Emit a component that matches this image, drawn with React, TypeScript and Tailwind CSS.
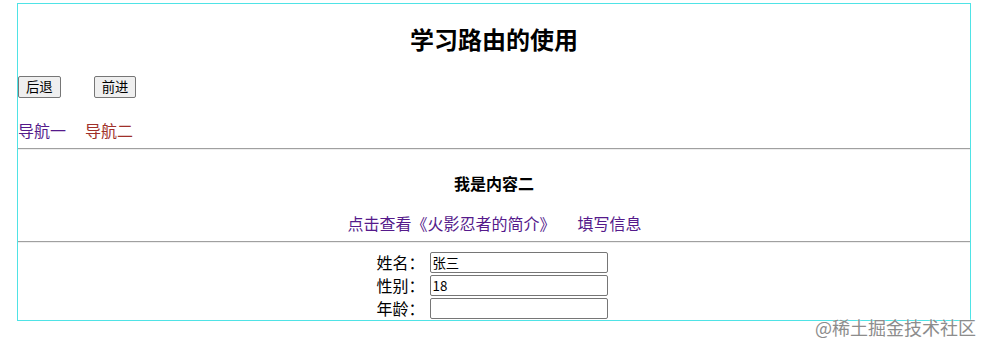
import React from 'react';

const cjk = "font-['Noto_Sans_CJK_SC','Noto_Sans',sans-serif]";

function Field({ label, value }: { label: string; value: string }) {
  return (
    <div className="flex h-[23px] items-start justify-center">
      <span className="mr-[5px] h-[21px] text-[16px] leading-[21px] text-black">{label}</span>
      <input
        readOnly
        value={value}
        className={`h-[21px] w-[178px] rounded-[2px] border border-[#767676] bg-white px-[2px] text-[13.33px] leading-[19px] text-black outline-none ${cjk}`}
      />
      <span className="w-[4px]" />
    </div>
  );
}

export default function App() {
  return (
    <div className={`relative h-[347px] w-[988px] bg-white ${cjk}`}>
      <div className="ml-[17px] mt-[3px] flex h-[318px] w-[954px] flex-col border border-[#4fe3e6]">
        <h2 className="mt-[19px] text-center text-[24px] font-bold leading-[32px] text-black">学习路由的使用</h2>

        <div className="mt-[21px] flex items-center">
          <button className="h-[22px] rounded-[2px] border border-[#767676] bg-[#efefef] px-[7px] text-[13.33px] leading-[18px] text-black">
            后退
          </button>
          <button className="ml-[33px] h-[22px] rounded-[2px] border border-[#767676] bg-[#efefef] px-[7px] text-[13.33px] leading-[18px] text-black">
            前进
          </button>
        </div>

        <div className="mt-[22px] flex text-[16px] leading-[20px]">
          <a className="text-[#551a8b]">导航一</a>
          <a className="ml-[19px] text-[#a0302a]">导航二</a>
        </div>

        <div className="mt-[8px] border-t border-b border-t-[#a0a0a0] border-b-[#eeeeee]" />

        <h4 className="mt-[23px] text-center text-[16px] font-bold leading-[20px] text-black">我是内容二</h4>

        <div className="mt-[20px] flex justify-center text-[16px] leading-[20px] text-[#551a8b]">
          <a className="ml-[1px]">点击查看《火影忍者的简介》</a>
          <a className="ml-[22px]">填写信息</a>
        </div>

        <div className="mt-[8px] border-t border-b border-t-[#a0a0a0] border-b-[#eeeeee]" />

        <div className="mt-[9px] flex flex-col">
          <Field label="姓名：" value="张三" />
          <Field label="性别：" value="18" />
          <Field label="年龄：" value="" />
        </div>
      </div>

      <div className="absolute left-[815px] top-[312px] text-[18px] leading-[24px] text-[#8c8c8c] [text-shadow:0_0_2px_#fff]">
        @稀土掘金技术社区
      </div>
    </div>
  );
}
